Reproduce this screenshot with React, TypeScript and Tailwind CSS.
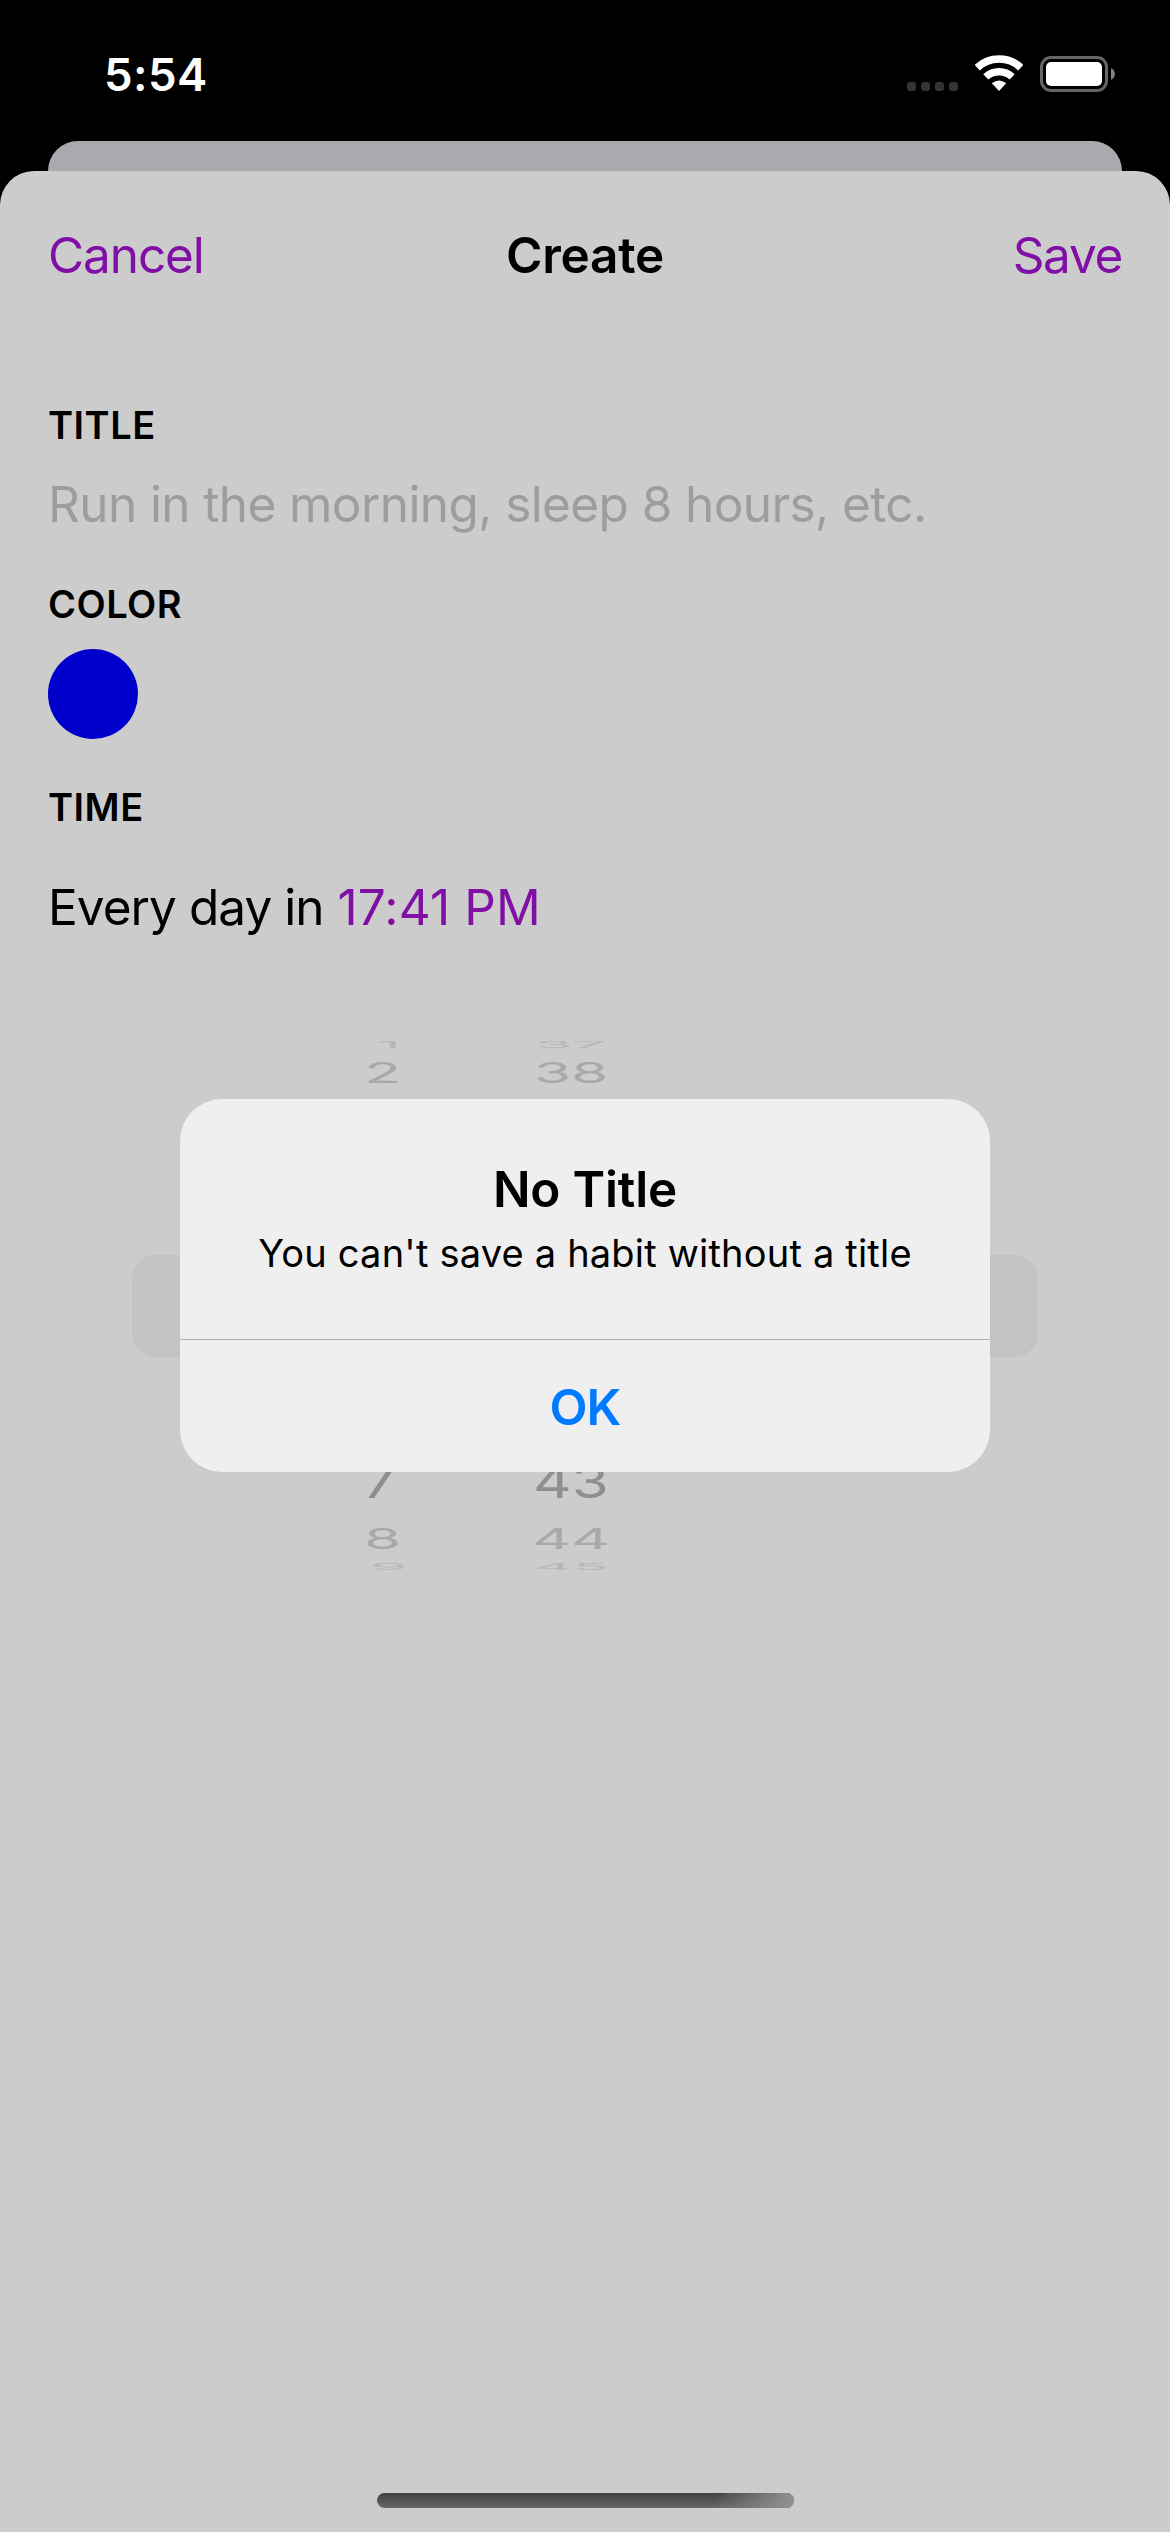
import type { ReactNode } from "react";

function StatusIcons() {
  return (
    <div className="flex h-9 items-center">
      <div className="mt-[27px] flex gap-[5px]">
        {[0, 1, 2, 3].map((dot) => (
          <span key={dot} className="size-[9px] rounded-[3px] bg-[#333333]" />
        ))}
      </div>
      <svg className="ml-[17px]" width="48" height="36" viewBox="0 0 48 36" fill="none">
        <path d="M2.2 12.6A32 32 0 0 1 45.8 12.6" stroke="#fff" strokeWidth="7.6" />
        <path d="M10.8 21.9A19.3 19.3 0 0 1 37.2 21.9" stroke="#fff" strokeWidth="7.4" />
        <path d="M24 36L16.8 28.3Q24 22.6 31.2 28.3Z" fill="#fff" />
      </svg>
      <svg className="mt-0.5 ml-[17px]" width="76" height="36" viewBox="0 0 76 36" fill="none">
        <rect x="1.5" y="1.5" width="65" height="33" rx="9.5" stroke="#666" strokeWidth="3" />
        <rect x="6" y="6" width="56" height="24" rx="5" fill="#fff" />
        <path d="M71 12.2C76.2 14 76.2 22 71 23.8Z" fill="#808080" />
      </svg>
    </div>
  );
}

function SectionLabel({ children }: { children: ReactNode }) {
  return (
    <h2 className="flex h-12 items-center text-[38px] font-semibold tracking-[0.5px]">
      {children}
    </h2>
  );
}

function WheelRow({
  hour,
  minute,
  row,
  text,
  hourShift = "",
}: {
  hour: string;
  minute: string;
  row: string;
  text: string;
  hourShift?: string;
}) {
  return (
    <div className={`flex items-center text-[60px] leading-none ${row}`}>
      <span className={`ml-[364px] w-[37px] text-center ${text} ${hourShift}`}>{hour}</span>
      <span className={`ml-[130px] w-20 text-center whitespace-nowrap ${text}`}>{minute}</span>
    </div>
  );
}

function TimeWheel() {
  return (
    <div className="-mx-12 mt-[103px] h-[529px]">
      <WheelRow
        hour="1"
        minute="37"
        row="h-[7px]"
        text="scale-y-[0.14] text-[#b7b7b7]"
        hourShift="translate-x-[6px]"
      />
      <WheelRow hour="2" minute="38" row="mt-0.5 h-[44px]" text="scale-y-[0.48] text-[#a9a9a9]" />
      <div className="flex h-[357px] items-start px-[132px] pt-[161px]">
        <div className="h-[102px] w-full rounded-[24px] bg-[#c3c3c3]" />
      </div>
      <WheelRow
        hour="7"
        minute="43"
        row="h-[60px]"
        text="scale-y-[0.76] text-[#8f8f8f]"
        hourShift="-translate-x-[3px]"
      />
      <WheelRow hour="8" minute="44" row="mt-[6px] h-[41px]" text="scale-y-[0.48] text-[#a9a9a9]" />
      <WheelRow
        hour="9"
        minute="45"
        row="mt-[5px] h-[7px]"
        text="scale-y-[0.14] text-[#b7b7b7]"
        hourShift="translate-x-[6px]"
      />
    </div>
  );
}

function AlertDialog() {
  return (
    <div
      role="alertdialog"
      className="absolute top-[1099px] left-[180px] flex h-[373px] w-[810px] flex-col items-center rounded-[42px] bg-[#efefef]"
    >
      <h3 className="mt-[60px] flex h-[60px] items-center text-[49.5px] font-semibold tracking-[-0.2px]">
        No Title
      </h3>
      <p className="mt-[10px] flex h-12 items-center text-[38px] tracking-[0.2px] whitespace-nowrap">
        You can't save a habit without a title
      </p>
      <div className="mt-[62px] h-px w-full bg-[#b1b1b1]" />
      <button className="flex h-[132px] w-full items-center justify-center pt-[3px] text-[49.5px] font-semibold tracking-[-1px] text-[#007aff]">
        OK
      </button>
    </div>
  );
}

export default function App() {
  return (
    <div className="relative flex h-[2532px] w-[1170px] flex-col overflow-hidden bg-black font-['Inter',sans-serif] text-black">
      <div className="flex h-[141px] shrink-0 items-start justify-between pr-[54px] pl-[104px]">
        <span className="mt-[50px] flex h-[50px] items-center text-[45.5px] font-semibold tracking-[0.4px] text-white">
          5:54
        </span>
        <div className="mt-[55px]">
          <StatusIcons />
        </div>
      </div>
      <div className="mx-12 h-[30px] shrink-0 rounded-t-[30px] bg-[#aaa9ae]" />

      <main className="flex flex-1 flex-col rounded-t-[34px] bg-[#cccccc] px-12">
        <header className="grid h-[168px] grid-cols-3 items-center text-[49.5px]">
          <button className="text-left tracking-[-1.1px] text-[#800fa5]">Cancel</button>
          <h1 className="text-center font-semibold tracking-[-0.24px]">Create</h1>
          <button className="text-right tracking-[-1.3px] text-[#800fa5]">Save</button>
        </header>

        <div className="mt-[62px]">
          <SectionLabel>TITLE</SectionLabel>
        </div>
        <p className="mt-[25px] flex h-[61px] items-center text-[49.5px] tracking-[-0.6px] whitespace-nowrap text-[#9d9d9d]">
          Run in the morning, sleep 8 hours, etc.
        </p>
        <div className="mt-[45px]">
          <SectionLabel>COLOR</SectionLabel>
        </div>
        <div className="mt-[21px] size-[90px] rounded-full bg-[#0000cc]" />
        <div className="mt-11">
          <SectionLabel>TIME</SectionLabel>
        </div>
        <div className="mt-[46px] flex h-[61px] items-center text-[49.5px] whitespace-nowrap">
          <span className="tracking-[-0.95px]">Every day in</span>
          <span className="ml-[14px] tracking-[0.15px] text-[#800fa5]">17:41 PM</span>
        </div>
        <TimeWheel />
      </main>

      <AlertDialog />
      <div className="absolute bottom-6 left-[377px] flex h-[15px] w-[417px] justify-end overflow-hidden rounded-full bg-linear-to-b from-[#404040] to-[#686868]">
        <div className="h-full w-20 bg-linear-to-r from-transparent to-[#929292]" />
      </div>
    </div>
  );
}
